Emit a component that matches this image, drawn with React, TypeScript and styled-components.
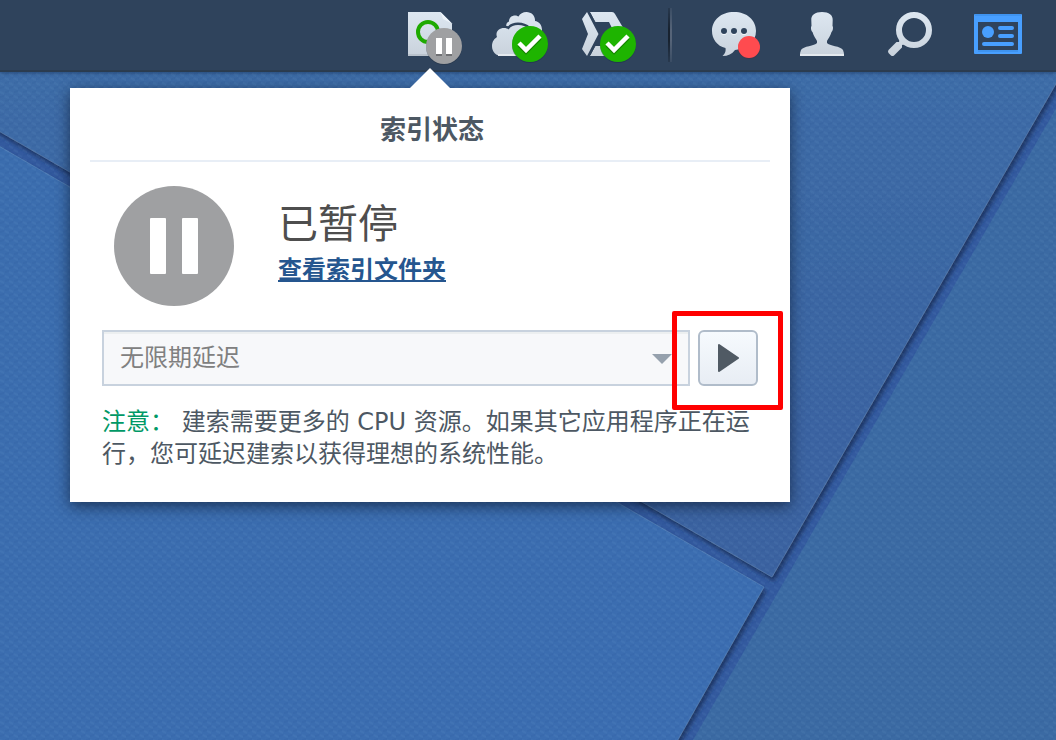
import React from "react";
import styled, { createGlobalStyle } from "styled-components";

const GlobalStyle = createGlobalStyle`
  *, *::before, *::after { box-sizing: border-box; }
  body {
    margin: 0;
    background: #32599a;
    font-family: "DejaVu Sans", "Noto Sans CJK SC", sans-serif;
    color: #4d5863;
  }
  button, select { font: inherit; }
`;

const Desktop = styled.div`
  position: relative;
  min-height: 100vh;
  overflow: hidden;
`;

const WallpaperSvg = styled.svg`
  position: absolute;
  inset: 0;
  width: 100%;
  height: 100%;
`;

const Taskbar = styled.header`
  position: relative;
  display: flex;
  justify-content: flex-end;
  align-items: center;
  height: 72px;
  padding-right: 14px;
  border-bottom: 2px solid #2b3c50;
  background: #2f435c;
  box-shadow: 0 1px 4px rgba(10, 30, 60, 0.45);
`;

const TrayButton = styled.button`
  width: 88px;
  height: 70px;
  padding: 0;
  border: 0;
  background: none;
  cursor: pointer;

  svg { display: block; }
`;

const Separator = styled.div`
  width: 4px;
  height: 54px;
  margin: 0 18px;
  background: linear-gradient(90deg, #18222f 50%, #566478 50%);
  mask-image: linear-gradient(rgba(0, 0, 0, 0.3), #000 40%, #000 60%, rgba(0, 0, 0, 0.3));
`;

const Workspace = styled.main`
  position: relative;
  display: flex;
  justify-content: flex-end;
  padding: 16px 266px 16px 16px;
`;

const Popover = styled.section`
  position: relative;
  width: 720px;
  padding: 0 20px 32px;
  background: #fff;
  box-shadow: 0 4px 14px rgba(8, 20, 40, 0.65);

  &::before {
    content: "";
    position: absolute;
    bottom: 100%;
    left: 50%;
    margin-left: -20px;
    border: 20px solid transparent;
    border-top: 0;
    border-bottom-color: #fff;
  }
`;

const PopoverTitle = styled.h1`
  margin: 0;
  padding: 12px 0 0 4px;
  border-bottom: 2px solid #e8eef6;
  font-size: 26px;
  font-weight: 700;
  line-height: 60px;
  text-align: center;
`;

const PopoverBody = styled.div`
  display: flex;
  flex-direction: column;
  padding: 24px 12px 0;
`;

const Status = styled.div`
  display: flex;
  align-items: center;
  gap: 44px;
  padding-left: 12px;
`;

const StatusText = styled.div`
  display: flex;
  flex-direction: column;
  align-items: flex-start;
  padding-bottom: 8px;
`;

const StatusName = styled.strong`
  font-size: 40px;
  font-weight: 400;
  line-height: 56px;
  color: #4e4e4e;
`;

const FolderLink = styled.a`
  font-size: 24px;
  font-weight: 700;
  line-height: 36px;
  color: #25568f;
`;

const Controls = styled.div`
  display: flex;
  gap: 8px;
  margin: 24px 0 20px;
`;

const SelectBox = styled.div`
  position: relative;
  flex: 1;

  svg {
    position: absolute;
    top: 24px;
    right: 18px;
    pointer-events: none;
  }
`;

const DelaySelect = styled.select`
  appearance: none;
  width: 100%;
  height: 56px;
  padding: 0 40px 0 16px;
  border: 2px solid #c8d2de;
  border-radius: 0;
  background: #f7f8fa;
  box-shadow: inset 0 2px #eceff0;
  color: #808080;
  font-size: 24px;
`;

const ResumeArea = styled.div`
  position: relative;
  width: 60px;
`;

const ResumeButton = styled.button`
  display: flex;
  align-items: center;
  justify-content: center;
  width: 100%;
  height: 56px;
  padding: 0;
  border: 2px solid #b0bcca;
  border-radius: 6px;
  background: linear-gradient(#f6fafe, #e8edf4);
  cursor: pointer;
`;

const Highlight = styled.div`
  position: absolute;
  inset: -19px -25px -24px -26px;
  border: 5px solid #f00;
  border-radius: 2px;
  pointer-events: none;
`;

const Note = styled.p`
  margin: 0;
  font-size: 24px;
  line-height: 32px;
`;

const NoteLabel = styled.span`
  color: #009966;
`;

function Wallpaper() {
  return (
    <WallpaperSvg viewBox="0 0 1056 740" preserveAspectRatio="xMidYMid slice" aria-hidden="true">
      <defs>
        <linearGradient id="upper" x1="0" y1="0" x2="0" y2="1">
          <stop offset="0" stopColor="#406fa9" />
          <stop offset="0.5" stopColor="#3a66a3" />
          <stop offset="1" stopColor="#3b62a0" />
        </linearGradient>
        <linearGradient id="lower" x1="0" y1="0" x2="1" y2="1">
          <stop offset="0" stopColor="#3b6dae" />
          <stop offset="1" stopColor="#3b6db1" />
        </linearGradient>
        <pattern id="weave" width="9" height="9" patternUnits="userSpaceOnUse">
          <path d="M0 2 L4 4 M5 6 L9 8" stroke="#9cc4ec" strokeOpacity="0.06" strokeWidth="2" />
          <path d="M5 2 L9 1 M0 7 L4 6" stroke="#123a78" strokeOpacity="0.06" strokeWidth="2" />
        </pattern>
        <filter id="lift" x="-5%" y="-5%" width="110%" height="110%">
          <feDropShadow dx="2" dy="4" stdDeviation="2" floodColor="#1c3563" floodOpacity="1" />
        </filter>
      </defs>
      <rect width="1056" height="740" fill="#335a9f" />
      <path d="M1066 91 L693 740 H1066 Z" fill="#3b6aa3" />
      <g filter="url(#lift)">
        <path d="M-10 -10 H1110 L772 577 L-10 126 Z" fill="url(#upper)" stroke="#6689b8" strokeOpacity="0.55" />
      </g>
      <g filter="url(#lift)">
        <path d="M-10 141 L764 587 L670 754 H-10 Z" fill="url(#lower)" stroke="#6c96c6" strokeOpacity="0.45" />
      </g>
      <rect width="1056" height="740" fill="url(#weave)" />
    </WallpaperSvg>
  );
}

function TrayIcon({ children }: { children: React.ReactNode }) {
  return (
    <svg width="88" height="70" viewBox="0 0 88 70" aria-hidden="true">
      <defs>
        <linearGradient id="silver" gradientUnits="userSpaceOnUse" x1="0" y1="12" x2="0" y2="56">
          <stop offset="0" stopColor="#dde7f1" />
          <stop offset="1" stopColor="#c9d2dc" />
        </linearGradient>
      </defs>
      {children}
    </svg>
  );
}

function CheckBadge() {
  return (
    <>
      <circle cx="56" cy="45" r="18" fill="#17324a" opacity="0.5" />
      <circle cx="56" cy="44" r="18" fill="#1eb400" />
      <path d="M45 45 L52 52 L66 38" fill="none" stroke="#168500" strokeWidth="4" />
      <path d="M45 43 L52 50 L66 36" fill="none" stroke="#fff" strokeWidth="4.5" />
    </>
  );
}

const frontCloud =
  "M28 56 C22 56 18 52 18 46 C18 41.500 20.500 38.500 23 37 C21 32 25 28 30 28 C32 28 33.500 28.500 34.500 29.500 C37 26 40 25 44 25 C53 25 58 31 59 38 L59 56 Z";

function IndexingIcon() {
  return (
    <TrayIcon>
      <path d="M22 12 H54.500 L66 23.500 V56 H22 Z" fill="url(#silver)" />
      <path d="M54.500 12 L66 23.500 L57 19 Z" fill="#eef4fa" />
      <path d="M22 55 H66" stroke="#b9c2cc" strokeWidth="2" />
      <circle cx="42" cy="32" r="10" fill="none" stroke="#1eaa00" strokeWidth="4" />
      <circle cx="58" cy="47" r="18" fill="#222f3e" opacity="0.4" />
      <circle cx="58" cy="46" r="18" fill="#9fa0a2" />
      <path d="M50 54 H56 V56 H50 Z M60 54 H66 V56 H60 Z" fill="#707174" />
      <path d="M50 38 H56 V54 H50 Z M60 38 H66 V54 H60 Z" fill="#fff" />
    </TrayIcon>
  );
}

function CloudIcon() {
  return (
    <TrayIcon>
      <path
        d="M32 27 C32 24 33 22 35 21.500 C35 17.500 38 15.500 41 15.500 C42.500 15.500 43.500 16 44.500 16.500 C46 13.500 49 12 52.500 12 C57.500 12 61.500 16 61 21 C65 21.500 68 25 68 30 L67 42 H40 Z"
        fill="url(#silver)"
      />
      <path d={frontCloud} fill="#2f435c" stroke="#2f435c" strokeWidth="5" />
      <path d={frontCloud} fill="url(#silver)" />
      <path d="M24 55 H56" stroke="#e4e9ee" strokeWidth="2" />
      <CheckBadge />
    </TrayIcon>
  );
}

function DriveIcon() {
  return (
    <TrayIcon>
      <path d="M25 12 L20 19 L26 34 L20 49 L25 56 L36.500 34 Z" fill="url(#silver)" />
      <path
        d="M28 12 H50 Q52 12 53 14 L63 31 V40 L50 56 H28 L33 46 H46 L53 34 L47 22 H33 Z"
        fill="url(#silver)"
      />
      <path d="M28 13 L33 22 L39 34 L33 46 L28 55" fill="none" stroke="#2f435c" strokeWidth="1" />
      <CheckBadge />
    </TrayIcon>
  );
}

function ChatIcon() {
  return (
    <TrayIcon>
      <path
        d="M44 12 C57 12 66 20 66 31 C66 42 57 49 45 50 C42 54 38 56 32.500 56 C35.500 53 36 51 35.500 48 C27 46 22 39 22 31 C22 20 31 12 44 12 Z"
        fill="url(#silver)"
      />
      <g fill="#f2f6fa">
        <circle cx="34" cy="32" r="3" />
        <circle cx="44" cy="32" r="3" />
        <circle cx="54" cy="32" r="3" />
      </g>
      <g fill="#2f435c">
        <circle cx="34" cy="31" r="3" />
        <circle cx="44" cy="31" r="3" />
        <circle cx="54" cy="31" r="3" />
      </g>
      <circle cx="59" cy="48" r="11" fill="#4c2e3d" opacity="0.5" />
      <circle cx="59" cy="47" r="11" fill="#ff4b4f" />
    </TrayIcon>
  );
}

function UserIcon() {
  return (
    <TrayIcon>
      <path
        d="M44 12 C51 12 55 15 54.700 20 L54.500 26 C55.500 27 55 31 53.500 32 C52.500 36 50 39 49 41 V43 C51 46 63 46 65 50 Q66 52 66 56 H22 Q22 52 23 50 C25 46 37 46 39 43 V41 C38 39 35.500 36 34.500 32 C33 31 32.500 27 33.500 26 L33.300 20 C33 15 37 12 44 12 Z"
        fill="url(#silver)"
      />
      <path d="M22 55 H66" stroke="#e4e9ee" strokeWidth="2" />
    </TrayIcon>
  );
}

function SearchIcon() {
  return (
    <TrayIcon>
      <circle cx="48" cy="30" r="15" fill="none" stroke="url(#silver)" strokeWidth="6" />
      <path
        d="M34 38 L40 44 L36 45 V47.500 L28 55.500 Q26.500 56.500 25 55.500 L22.500 53 Q21.500 51.500 22.500 50 L30.500 42 H33 Z"
        fill="url(#silver)"
      />
    </TrayIcon>
  );
}

function WidgetIcon() {
  return (
    <TrayIcon>
      <path
        fillRule="evenodd"
        d="M21 14 H67 Q68 14 68 15 V53 Q68 54 67 54 H21 Q20 54 20 53 V15 Q20 14 21 14 Z M24 22 V50 H64 V22 Z"
        fill="#489fff"
      />
      <path d="M21 15 H67 M24 51 H64" stroke="#3f93ef" strokeWidth="2" />
      <circle cx="34" cy="32" r="6" fill="#489fff" />
      <path d="M46 28 H58 M46 36 H58 M30 44 H58" stroke="#489fff" strokeWidth="4" strokeLinecap="round" />
    </TrayIcon>
  );
}

function PausedIcon() {
  return (
    <svg width="120" height="120" viewBox="0 0 120 120" aria-hidden="true">
      <circle cx="60" cy="60" r="60" fill="#9fa0a2" />
      <rect x="36" y="32" width="16" height="56" rx="1" fill="#fff" />
      <rect x="68" y="32" width="16" height="56" rx="1" fill="#fff" />
    </svg>
  );
}

export default function App() {
  return (
    <>
      <GlobalStyle />
      <Desktop>
        <Wallpaper />
        <Taskbar>
          <TrayButton aria-label="索引状态"><IndexingIcon /></TrayButton>
          <TrayButton aria-label="Cloud Sync"><CloudIcon /></TrayButton>
          <TrayButton aria-label="Drive"><DriveIcon /></TrayButton>
          <Separator />
          <TrayButton aria-label="通知"><ChatIcon /></TrayButton>
          <TrayButton aria-label="选项"><UserIcon /></TrayButton>
          <TrayButton aria-label="搜索"><SearchIcon /></TrayButton>
          <TrayButton aria-label="小工具"><WidgetIcon /></TrayButton>
        </Taskbar>
        <Workspace>
          <Popover>
            <PopoverTitle>索引状态</PopoverTitle>
            <PopoverBody>
              <Status>
                <PausedIcon />
                <StatusText>
                  <StatusName>已暂停</StatusName>
                  <FolderLink href="#folders">查看索引文件夹</FolderLink>
                </StatusText>
              </Status>
              <Controls>
                <SelectBox>
                  <DelaySelect aria-label="延迟时间">
                    <option>无限期延迟</option>
                  </DelaySelect>
                  <svg width="20" height="10" viewBox="0 0 20 10" aria-hidden="true">
                    <path d="M0 0 H20 L10 10 Z" fill="#96a1ad" />
                  </svg>
                </SelectBox>
                <ResumeArea>
                  <ResumeButton aria-label="继续">
                    <svg width="24" height="28" viewBox="0 0 24 28" aria-hidden="true">
                      <path
                        d="M3 1 L22 14 L3 27 Z"
                        fill="#505a64"
                        stroke="#505a64"
                        strokeWidth="2"
                        strokeLinejoin="round"
                      />
                    </svg>
                  </ResumeButton>
                  <Highlight />
                </ResumeArea>
              </Controls>
              <Note>
                <NoteLabel>注意：</NoteLabel> 建索需要更多的 CPU 资源。如果其它应用程序正在运行，您可延迟建索以获得理想的系统性能。
              </Note>
            </PopoverBody>
          </Popover>
        </Workspace>
      </Desktop>
    </>
  );
}
